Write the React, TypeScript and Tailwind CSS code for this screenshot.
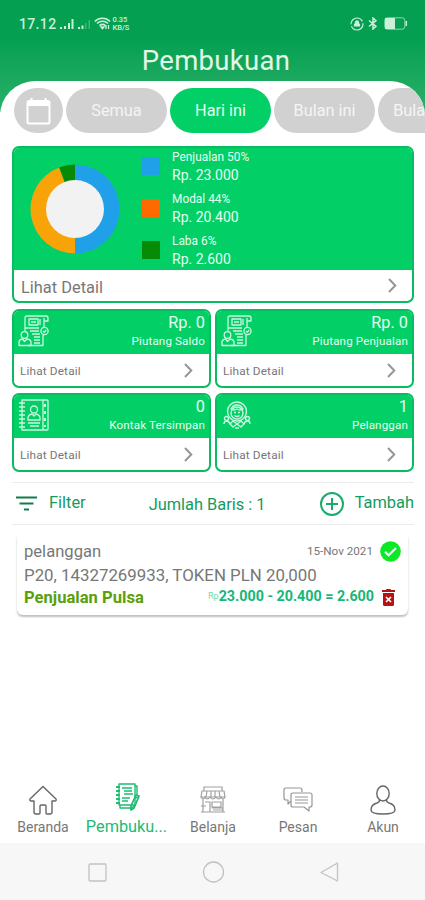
import type { ReactNode } from "react";

interface SummaryCardProps {
  icon: ReactNode;
  value: string;
  label: string;
}

const FILTERS = ["Semua", "Hari ini", "Bulan ini", "Bulan lalu"];
const ACTIVE_FILTER = "Hari ini";

const LEGEND = [
  { label: "Penjualan 50%", value: "Rp. 23.000", color: "bg-[#20a0e8]" },
  { label: "Modal 44%", value: "Rp. 20.400", color: "bg-[#ff6a00]" },
  { label: "Laba 6%", value: "Rp. 2.600", color: "bg-[#078a05]" },
];

function StatusBar() {
  return (
    <div className="flex h-[46px] items-center pt-[1px] pl-[19px] pr-[17px] text-[#c9f0d8]">
      <span className="text-[14px] leading-none font-medium tracking-[0.35px]">17.12</span>
      <svg className="ml-[4px]" width="31" height="12" viewBox="0 0 31 12" fill="currentColor">
        <path d="M0 9h2v2H0zM4 8h2v3H4zM8 5h2v6H8zM11.500 1h2v10h-2z" />
        <path d="M18 9h2v2h-2zM21.500 7.500h2V11h-2z" />
        <path d="M25 5h1.500v6H25zM28.500 2H30v9h-1.500z" opacity=".3" />
      </svg>
      <svg className="ml-[3px]" width="17" height="13" viewBox="0 0 17 13" fill="none" stroke="currentColor" strokeWidth="1.600">
        <path d="M.8 4.500C5 .2 12 .2 16 4.500M3 6.500c3-3 8-3 11 0M5.500 8.600c2-1.700 4-1.700 6 0" />
        <path d="M7 10l1.500 1.700L10 10zM12 8v4M14.500 8v4" strokeWidth="1.300" />
      </svg>
      <span className="ml-[1px] flex flex-col text-[7.5px] leading-[8px] font-medium">
        <span>0.35</span>
        <span>KB/S</span>
      </span>
      <svg className="ml-auto" width="14" height="14" viewBox="0 0 14 14" fill="none" stroke="currentColor" strokeWidth="1.200">
        <circle cx="7" cy="7" r="6" strokeDasharray="16 2" />
        <path d="M4.500 9V7.500l1-1V5.300a1.500 1.500 0 0 1 3 0v1.200l1 1V9z" fill="currentColor" />
      </svg>
      <svg className="ml-[4px]" width="10" height="13" viewBox="0 0 10 13" fill="none" stroke="currentColor" strokeWidth="1.500">
        <path d="M1 3.500l7 5.800L5 12V1l3 2.700L1 9.500" />
      </svg>
      <svg className="ml-[6px]" width="24" height="13" viewBox="0 0 24 13">
        <rect x=".8" y=".8" width="20" height="11.400" rx="2.500" fill="none" stroke="currentColor" strokeWidth="1" opacity=".7" />
        <path d="M1 1h10v11H1z" fill="currentColor" />
        <path d="M22.300 4v5" stroke="currentColor" strokeWidth="1.500" />
      </svg>
    </div>
  );
}

function Donut() {
  return (
    <svg width="90" height="90" viewBox="-45 -45 90 90">
      <path d="M0-44.500A44.500 44.500 0 0 1 0 44.500V0z" fill="#20a0e8" />
      <path d="M0 44.500A44.500 44.500 0 0 1-15.800-41.600L0 0z" fill="#f8a408" />
      <path d="M-15.800-41.600A44.500 44.500 0 0 1 0-44.500V0z" fill="#078a05" />
      <circle r="29" fill="#f2f2f2" />
    </svg>
  );
}

function Chevron() {
  return (
    <svg width="9" height="15" viewBox="0 0 9 15" fill="none" stroke="#969696" strokeWidth="2">
      <path d="M1 1l6.300 6.500L1 14" />
    </svg>
  );
}

function ReceivableIcon() {
  return (
    <svg width="31" height="32" viewBox="0 0 31 32" fill="none" stroke="#c8f8de" strokeWidth="1.300" strokeLinejoin="round">
      <path d="M7 17V3q0-2 2-2h19q2 0 2 2v3h-4V3M26 6v6M10 30.500h15V20M7 13h14" />
      <path d="M11 4h9v6h-9zM22 4v6M13 7h5M12 16h9M14 19h8M16 22h6M16 25h6M16 28h6" />
      <circle cx="26.500" cy="16" r="3.600" />
      <path d="M25 16l1.200 1.200L28.300 15" />
      <circle cx="6.500" cy="20" r="3.300" />
      <path d="M1 30.500v-3q0-3 3.500-3.500l2 2.500L9 24q4 .5 4 3.500v3z" />
    </svg>
  );
}

function ContactIcon() {
  return (
    <svg className="ml-[1px]" width="30" height="32" viewBox="0 0 30 32" fill="none" stroke="#c8f8de" strokeWidth="1.300" strokeLinejoin="round">
      <path d="M3 1h25q1 0 1 1v28q0 1-1 1H3zM24 1v30" />
      <path d="M0 4h6M0 8h6M0 12h6M0 16h6M0 20h6M0 24h6M0 28h6" strokeWidth="1.600" />
      <path d="M26 5v3M26 12v3M26 19v3M26 26v2" strokeWidth="2" />
      <circle cx="15" cy="10.500" r="3.500" />
      <path d="M9 21v-2q0-3 4-4l2 2 2-2q4 1 4 4v2zM9 24h12M11 27h9" />
    </svg>
  );
}

function CustomerIcon() {
  return (
    <svg className="mt-[2px] ml-[2px]" width="28" height="28" viewBox="0 0 28 28" fill="none" stroke="#c8f8de" strokeWidth="1.400" strokeLinejoin="round">
      <circle cx="14" cy="10.500" r="9.500" />
      <circle cx="14" cy="12" r="6" />
      <path d="M8 8q2-4 6-4t6 4q-3 2-6 0-3 2-6 0zM11 11.500h2M15 11.500h2M11.500 14.500q2.500 2 5 0" />
      <circle cx="3.500" cy="17.500" r="2" />
      <circle cx="24.500" cy="17.500" r="2" />
      <path d="M1 23q0-3 2.500-3T7 23l3-3 4 3 4-3 3 3q1-3 3.500-3t2.500 3M7 23l3 3 4-3 4 3 3-3M12 27h4" />
    </svg>
  );
}

function SummaryCard({ icon, value, label }: SummaryCardProps) {
  return (
    <div className="h-[79px] overflow-hidden rounded-[7px] border-2 border-[#08bd61] bg-white">
      <div className="flex h-[43px] justify-between bg-[#03cf67] pr-[4px] pl-1 text-[#e4fff0]">
        <div className="pt-[4px]">{icon}</div>
        <div className="text-right">
          <div className="mt-[1px] text-[16.3px] leading-[21px]">{value}</div>
          <div className="text-[11.6px] leading-4 tracking-[0.15px]">{label}</div>
        </div>
      </div>
      <div className="flex h-8 items-center justify-between pl-[6px] pr-[16px]">
        <span className="pt-[4px] text-[11.8px] tracking-[0.15px] text-[#777]">Lihat Detail</span>
        <Chevron />
      </div>
    </div>
  );
}

function HomeIcon() {
  return (
    <svg width="30" height="30" viewBox="0 0 30 30" fill="none" stroke="#666" strokeWidth="1.400" strokeLinejoin="round">
      <path d="M15 1.500L2 14q-.8 1.500 1 2h3v11q0 2 2 2h3q1 0 1-1v-7q0-1 1-1h4q1 0 1 1v7q0 1 1 1h3q2 0 2-2V16h3q1.800-.5 1-2z" />
    </svg>
  );
}

function BookIcon() {
  return (
    <svg width="26" height="28" viewBox="0 0 26 28" fill="none" stroke="#20bb74" strokeWidth="1.400" strokeLinejoin="round">
      <path d="M4 1h16v21H4zM5 22v3h12l3-3M20 3h2v9M7 5h10M9 8h8M9 11h9M7 15h8M7 18h6" />
      <path d="M1 4h4M1 8h4M1 12h4M1 16h4M1 20h4" strokeWidth="2" />
      <path d="M21 12l3 1-5 12-3 2v-4zM20 14l3 1" strokeWidth="1.800" />
    </svg>
  );
}

function StoreIcon() {
  return (
    <svg width="26" height="28" viewBox="0 0 26 28" fill="none" stroke="#a0a0a0" strokeWidth="1.200">
      <path d="M4 1h18v4H4zM2 5h22l1 6H1zM7 5l-1 6M11 5v6M15 5v6M19 5l1 6" />
      <path d="M1 11q2 4 4 0 2 4 5 0 3 4 6 0 3 4 5 0 2 4 4 0M3 13v13M23 13v13M1 26h24M5 16h5v10M10 16v6M12 16h9v5h-9zM12 22h11M13 24h10M1 20h5" />
    </svg>
  );
}

function ChatIcon() {
  return (
    <svg width="30" height="26" viewBox="0 0 30 26" fill="none" stroke="#969696" strokeWidth="1.200" strokeLinejoin="round">
      <path d="M8 14l-3 3v-4H3q-2 0-2-2V3q0-2 2-2h14q2 0 2 2v2" />
      <path d="M10 6h17q2 0 2 2v10q0 2-2 2h-1v4l-5-4H10q-2 0-2-2V8q0-2 2-2zM12 10h13M12 13h13M12 16h13" />
    </svg>
  );
}

function UserIcon() {
  return (
    <svg width="26" height="30" viewBox="0 0 26 30" fill="none" stroke="#666" strokeWidth="1.400">
      <ellipse cx="13" cy="8.500" rx="6.200" ry="7.500" />
      <path d="M9.500 14.500Q10 17 7 18q-6 1.500-6 7 0 4 12 4t12-4q0-5.500-6-7-3-1-2.500-3.500" />
    </svg>
  );
}

const NAV_ITEMS = [
  { label: "Beranda", icon: <HomeIcon /> },
  { label: "Pembuku...", icon: <BookIcon />, active: true },
  { label: "Belanja", icon: <StoreIcon /> },
  { label: "Pesan", icon: <ChatIcon /> },
  { label: "Akun", icon: <UserIcon /> },
];

export default function App() {
  return (
    <div className="flex h-[900px] w-[425px] flex-col overflow-hidden bg-white font-['Roboto',sans-serif]">
      <div className="bg-[linear-gradient(#049f50_35px,#2bb069_112px,#ffffff_112px)]">
        <StatusBar />
        <h1 className="h-[35px] pl-[7px] text-center text-[27.5px] leading-[29px] tracking-[0.3px] text-[#e0f8e9]">
          Pembukuan
        </h1>

        {/* Period filter */}
        <div className="flex h-[65px] gap-[3px] overflow-hidden rounded-t-[35px] bg-white pt-[7px] pl-[14px]">
          <div className="flex h-[45px] w-[49px] shrink-0 items-center justify-center rounded-full bg-[#d1d1d1]">
            <svg width="26" height="28" viewBox="0 0 26 28" fill="none" stroke="#fff">
              <rect x="1.500" y="4" width="22" height="22.500" rx="1.500" strokeWidth="2" />
              <path d="M1 6.500h23" strokeWidth="5" />
              <path d="M5.500 1v5M19.500 1v5" strokeWidth="2" />
            </svg>
          </div>
          {FILTERS.map((f) => (
            <div
              key={f}
              className={`flex h-[45px] w-[101px] shrink-0 items-center justify-center rounded-full pt-[2px] text-[16.3px] ${
                f === ACTIVE_FILTER ? "bg-[#03cf67] text-[#e4fff0]" : "bg-[#d1d1d1] text-[#f5f5f5]"
              }`}
            >
              {f}
            </div>
          ))}
        </div>
      </div>

      <div className="flex flex-col pr-[11px] pl-[12px]">
        {/* Profit overview */}
        <div className="h-[157px] overflow-hidden rounded-[7px] border-2 border-[#08bd61] bg-white">
          <div className="flex h-[122px] bg-[#03cf67] pl-[16px]">
            <div className="pt-[16px]">
              <Donut />
            </div>
            <div className="ml-[22px] flex flex-col">
              {LEGEND.map((item) => (
                <div key={item.label} className="flex h-[42px] shrink-0 gap-[12px] text-[#e4fff0]">
                  <div className={`mt-[9px] h-[18px] w-[18px] ${item.color}`} />
                  <div>
                    <div className="mt-[1px] text-[11.9px] leading-4">{item.label}</div>
                    <div className="text-[14px] leading-5">{item.value}</div>
                  </div>
                </div>
              ))}
            </div>
          </div>
          <div className="flex h-[31px] items-center justify-between pl-[7px] pr-[15px]">
            <span className="pt-[6px] text-[16.4px] text-[#777]">Lihat Detail</span>
            <Chevron />
          </div>
        </div>

        <div className="mt-[6px] grid grid-cols-2 gap-x-[4px] gap-y-[5px]">
          <SummaryCard icon={<ReceivableIcon />} value="Rp. 0" label="Piutang Saldo" />
          <SummaryCard icon={<ReceivableIcon />} value="Rp. 0" label="Piutang Penjualan" />
          <SummaryCard icon={<ContactIcon />} value="0" label="Kontak Tersimpan" />
          <SummaryCard icon={<CustomerIcon />} value="1" label="Pelanggan" />
        </div>

        {/* List toolbar */}
        <div className="mt-[10px] flex h-[43px] items-center border-y border-[#ececec] pl-[4px] text-[16.4px] text-[#149b60]">
          <svg width="22" height="15" viewBox="0 0 22 15" stroke="#127a4c" strokeWidth="2.200">
            <path d="M0 1.500h21M3.500 7.500h14M8 13.500h5" />
          </svg>
          <span className="ml-[11px]">Filter</span>
          <span className="ml-[63px] pt-[4px]">Jumlah Baris : 1</span>
          <svg className="ml-auto" width="24" height="24" viewBox="0 0 24 24" fill="none" stroke="#16ad6b" strokeWidth="2">
            <circle cx="12" cy="12" r="11" />
            <path d="M6 12h12M12 6v12" />
          </svg>
          <span className="ml-[11px]">Tambah</span>
        </div>
      </div>

      {/* Transaction */}
      <div className="mt-[7px] ml-[17px] h-[83px] w-[391px] rounded-[6px] bg-white pt-[8px] pr-[7px] pl-[7px] shadow-[0_2px_2px_rgba(0,0,0,0.25)]">
        <div className="flex h-[23px] items-center text-[#777]">
          <span className="pt-px text-[16.6px]">pelanggan</span>
          <span className="ml-auto pt-px text-[11.7px]">15-Nov 2021</span>
          <svg className="ml-[7px]" width="21" height="21" viewBox="0 0 21 21">
            <circle cx="10.500" cy="10.500" r="10.300" fill="#0be825" />
            <path d="M5 10.800l3.600 3.500L16 7" fill="none" stroke="#eafff0" strokeWidth="2.200" />
          </svg>
        </div>
        <div className="h-[23px] text-[16.85px] leading-[25px] text-[#777]">P20, 14327269933, TOKEN PLN 20,000</div>
        <div className="flex h-[22px] items-center">
          <span className="pt-[3px] text-[16.6px] font-bold text-[#5aa00c]">Penjualan Pulsa</span>
          <span className="ml-auto text-[9px] text-[#6fddaf]">Rp</span>
          <span className="text-[14.3px] font-bold text-[#16b777]">23.000 - 20.400 = 2.600</span>
          <svg className="mr-[6px] ml-[8px]" width="13" height="17" viewBox="0 0 13 17">
            <path d="M0 1h4l.5-1h4L9 1h4v2H0zM1 4h11v11.500q0 1.500-1.500 1.500h-8Q1 17 1 15.500z" fill="#b31313" />
            <path d="M4 8l5 5M9 8l-5 5" stroke="#fff" strokeWidth="1.700" />
          </svg>
        </div>
      </div>

      {/* Bottom navigation */}
      <div className="mt-auto grid h-[62px] grid-cols-5">
        {NAV_ITEMS.map((item) => (
          <div key={item.label} className="flex flex-col items-center pl-[1px]">
            <div className={`flex h-[32px] items-center ${item.active ? "" : "mt-[3px]"}`}>{item.icon}</div>
            <span
              className={
                item.active
                  ? "mt-[2px] pr-[3px] text-[16.3px] leading-[24px] text-[#20bb74]"
                  : "mt-px text-[14px] leading-[20px] text-[#777]"
              }
            >
              {item.label}
            </span>
          </div>
        ))}
      </div>

      {/* System buttons */}
      <div className="flex h-[57px] items-center bg-[#f7f7f7] pl-[88px]">
        <svg width="252" height="24" viewBox="0 0 252 24" fill="none" stroke="#c2c2c2" strokeWidth="1.300" strokeLinejoin="round">
          <rect x="1" y="4" width="17" height="17" rx="1" />
          <circle cx="125.500" cy="12" r="10" />
          <path d="M249.500 3v18L233 12.500z" />
        </svg>
      </div>
    </div>
  );
}
